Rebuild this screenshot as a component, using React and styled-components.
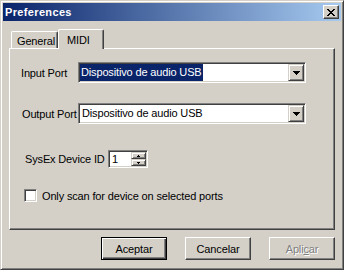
import React from "react";
import styled, { createGlobalStyle } from "styled-components";

const GlobalStyle = createGlobalStyle`
  html, body { margin: 0; padding: 0; background: #d4d0c8; }
  body {
    font-family: "Liberation Sans", Arial, sans-serif;
    font-size: 11px;
    letter-spacing: -0.15px;
    color: #000;
  }
`;

const Window = styled.div`
  width: 344px;
  height: 270px;
  box-sizing: border-box;
  background: #d4d0c8;
  border: 1px solid;
  border-color: #d4d0c8 #404040 #404040 #d4d0c8;
  box-shadow: inset 1px 1px #fff, inset -1px -1px #808080;
  padding: 2px;
  display: flex;
  flex-direction: column;
`;

const TitleBar = styled.div`
  flex: none;
  height: 18px;
  display: flex;
  align-items: center;
  justify-content: space-between;
  padding: 0 2px 0 2px;
  background: linear-gradient(to right, #0a246a, #a6caf0);
  color: #fff;
  font-weight: bold;
  font-size: 11px;
  letter-spacing: 0.35px;
`;

const Caption = styled.span`
  white-space: nowrap;
`;

const CaptionButton = styled.div`
  width: 16px;
  height: 14px;
  box-sizing: border-box;
  background: #d4d0c8;
  border: 1px solid;
  border-color: #fff #404040 #404040 #fff;
  box-shadow: inset -1px -1px #808080;
  display: flex;
  align-items: center;
  justify-content: center;
`;

const Body = styled.div`
  flex: 1;
  display: flex;
  flex-direction: column;
  padding: 8px 6px 0 6px;
`;

const TabStrip = styled.div`
  display: flex;
  align-items: flex-end;
  height: 19px;
  padding-left: 2px;
`;

const Tab = styled.div`
  box-sizing: border-box;
  width: ${(p) => p.$w}px;
  height: ${(p) => (p.$active ? 20 : 17)}px;
  margin-bottom: ${(p) => (p.$active ? -1 : 0)}px;
  position: relative;
  z-index: ${(p) => (p.$active ? 1 : 0)};
  background: #d4d0c8;
  border-top: 1px solid #fff;
  border-left: 1px solid #fff;
  border-right: 1px solid #404040;
  border-radius: 2px 2px 0 0;
  box-shadow: inset -1px 0 #808080;
  display: flex;
  align-items: center;
  padding-left: ${(p) => p.$pad}px;
  padding-top: ${(p) => (p.$active ? 0 : 2)}px;
  white-space: nowrap;
`;

const Panel = styled.div`
  box-sizing: border-box;
  height: 182px;
  border-top: 1px solid #fff;
  border-left: 1px solid #fff;
  border-right: 1px solid #404040;
  border-bottom: 1px solid #404040;
  box-shadow: inset -1px -1px #808080;
  padding-top: 13px;
  display: flex;
  flex-direction: column;
`;

const Field = styled.div`
  display: flex;
  align-items: center;
  margin-top: ${(p) => p.$top || 0}px;
  padding-left: ${(p) => p.$indent}px;
`;

const Label = styled.span`
  flex: none;
  width: ${(p) => (p.$w ? `${p.$w}px` : "auto")};
  white-space: nowrap;
`;

const Combo = styled.div`
  width: 228px;
  height: 21px;
  box-sizing: border-box;
  background: #fff;
  border: 1px solid;
  border-color: #808080 #fff #fff #808080;
  box-shadow: inset 1px 1px #404040, inset -1px -1px #d4d0c8;
  padding: 1px;
  display: flex;
  align-items: stretch;
`;

const ComboValue = styled.div`
  flex: 1;
  min-width: 0;
  display: flex;
  align-items: stretch;
  padding-left: ${(p) => (p.$selected ? 0 : 1)}px;
`;

const ValueText = styled.span`
  display: block;
  line-height: 17px;
  padding: 0 1px;
  white-space: nowrap;
  background: ${(p) => (p.$selected ? "#0a246a" : "transparent")};
  color: ${(p) => (p.$selected ? "#fff" : "#000")};
`;

const Raised = styled.div`
  flex: none;
  box-sizing: border-box;
  width: ${(p) => p.$w}px;
  height: ${(p) => p.$h}px;
  background: #d4d0c8;
  border: 1px solid;
  border-color: #d4d0c8 #404040 #404040 #d4d0c8;
  box-shadow: inset 1px 1px #fff, inset -1px -1px #808080;
  display: flex;
  align-items: center;
  justify-content: center;
`;

const SpinFrame = styled.div`
  width: 40px;
  height: 18px;
  box-sizing: border-box;
  background: #fff;
  border: 1px solid;
  border-color: #808080 #fff #fff #808080;
  box-shadow: inset 1px 1px #404040, inset -1px -1px #d4d0c8;
  padding: 1px;
  display: flex;
`;

const SpinText = styled.div`
  flex: 1;
  display: flex;
  align-items: center;
  padding-left: 2px;
`;

const SpinButtons = styled.div`
  display: flex;
  flex-direction: column;
`;

const CheckRow = styled.label`
  display: flex;
  align-items: center;
  gap: 5px;
  margin-top: ${(p) => p.$top}px;
  padding-left: ${(p) => p.$indent}px;
  white-space: nowrap;
`;

const CheckBox = styled.span`
  width: 13px;
  height: 13px;
  box-sizing: border-box;
  background: #fff;
  border: 1px solid;
  border-color: #808080 #fff #fff #808080;
  box-shadow: inset 1px 1px #404040, inset -1px -1px #d4d0c8;
`;

const ButtonRow = styled.div`
  display: flex;
  justify-content: flex-end;
  gap: 18px;
  margin-top: 7px;
`;

const Button = styled.button`
  width: 66px;
  height: 23px;
  box-sizing: border-box;
  padding: 0;
  margin: 0;
  font-family: inherit;
  font-size: 11px;
  letter-spacing: inherit;
  background: #d4d0c8;
  color: ${(p) => (p.disabled ? "#808080" : "#000")};
  text-shadow: ${(p) => (p.disabled ? "1px 1px #fff" : "none")};
  border: 1px solid;
  border-color: ${(p) => (p.$default ? "#000" : "#fff #404040 #404040 #fff")};
  box-shadow: ${(p) =>
    p.$default
      ? "inset 1px 1px #fff, inset -1px -1px #404040, inset -2px -2px #808080"
      : "inset -1px -1px #808080"};
  outline: none;
`;

const Underline = styled.span`
  text-decoration: underline;
`;

function PixelGlyph({ rows }) {
  const w = rows[0].length;
  const h = rows.length;
  const rects = [];
  rows.forEach((r, y) =>
    r.split("").forEach((c, x) => {
      if (c === "X") rects.push(<rect key={`${x}-${y}`} x={x} y={y} width="1" height="1" />);
    })
  );
  return (
    <svg width={w} height={h} viewBox={`0 0 ${w} ${h}`} shapeRendering="crispEdges" fill="#000">
      {rects}
    </svg>
  );
}

const CLOSE = ["XX....XX", ".XX..XX.", "..XXXX..", "...XX...", "..XXXX..", ".XX..XX.", "XX....XX"];
const DOWN = ["XXXXXXX", ".XXXXX.", "..XXX..", "...X..."];
const SUP = ["..X..", ".XXX."];
const SDOWN = [".XXX.", "..X.."];

function ComboBox({ value, selected }) {
  return (
    <Combo>
      <ComboValue $selected={selected}>
        <ValueText $selected={selected}>{value}</ValueText>
      </ComboValue>
      <Raised $w={16} $h={17}>
        <PixelGlyph rows={DOWN} />
      </Raised>
    </Combo>
  );
}

export default function App() {
  return (
    <>
      <GlobalStyle />
      <Window>
        <TitleBar>
          <Caption>Preferences</Caption>
          <CaptionButton>
            <PixelGlyph rows={CLOSE} />
          </CaptionButton>
        </TitleBar>
        <Body>
          <TabStrip>
            <Tab $w={47} $pad={5}>General</Tab>
            <Tab $w={46} $pad={8} $active>MIDI</Tab>
          </TabStrip>
          <Panel>
            <Field $indent={11}>
              <Label $w={57}>Input Port</Label>
              <ComboBox value="Dispositivo de audio USB" selected />
            </Field>
            <Field $indent={12} $top={20}>
              <Label $w={56}>Output Port</Label>
              <ComboBox value="Dispositivo de audio USB" />
            </Field>
            <Field $indent={15} $top={26}>
              <Label $w={83}>SysEx Device ID</Label>
              <SpinFrame>
                <SpinText>1</SpinText>
                <SpinButtons>
                  <Raised $w={15} $h={7}>
                    <PixelGlyph rows={SUP} />
                  </Raised>
                  <Raised $w={15} $h={7}>
                    <PixelGlyph rows={SDOWN} />
                  </Raised>
                </SpinButtons>
              </SpinFrame>
            </Field>
            <CheckRow $indent={14} $top={21}>
              <CheckBox />
              <span>Only scan for device on selected ports</span>
            </CheckRow>
          </Panel>
          <ButtonRow>
            <Button $default>Aceptar</Button>
            <Button>Cancelar</Button>
            <Button disabled>
              Apli<Underline>c</Underline>ar
            </Button>
          </ButtonRow>
        </Body>
      </Window>
    </>
  );
}
